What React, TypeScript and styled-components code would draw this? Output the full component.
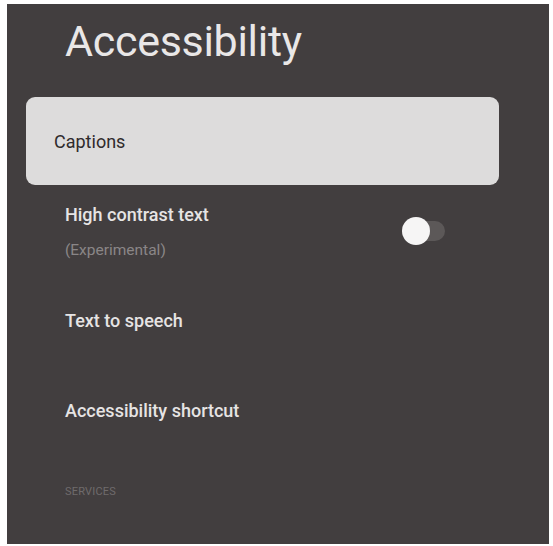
import styled, { createGlobalStyle } from 'styled-components';

const GlobalStyle = createGlobalStyle`
	html, body {
		margin: 0;
		padding: 0;
		background: #ffffff;
	}
	body {
		font-family: Roboto, "Noto Sans", "Liberation Sans", sans-serif;
	}
`;

type Item = {
	title: string;
	subtitle?: string;
	toggle?: boolean;
};

const items: Item[] = [
	{ title: 'High contrast text', subtitle: '(Experimental)', toggle: false },
	{ title: 'Text to speech' },
	{ title: 'Accessibility shortcut' },
];

export default function App() {
	return (
		<Page>
			<GlobalStyle />
			<Panel>
				<Title>Accessibility</Title>

				<List>
					<FocusedCard>
						<CardLabel>Captions</CardLabel>
					</FocusedCard>

					{items.map((item) => (
						<Row key={item.title}>
							<TextCol>
								<RowTitle>{item.title}</RowTitle>
								{item.subtitle && <RowSub>{item.subtitle}</RowSub>}
							</TextCol>
							{item.toggle !== undefined && (
								<Track>
									<Thumb />
								</Track>
							)}
						</Row>
					))}

					<SectionHeader>Services</SectionHeader>
				</List>
			</Panel>
		</Page>
	);
}

const Page = styled.div`
	display: flex;
	width: 553px;
	height: 546px;
	padding: 4px 4px 2px 7px;
	box-sizing: border-box;
	background: #ffffff;
`;

const Panel = styled.div`
	flex: 1;
	display: flex;
	flex-direction: column;
	background: #423e3f;
	padding: 12px 50px 0 19px;
	box-sizing: border-box;
	overflow: hidden;
`;

const Title = styled.h1`
	margin: 0 0 31px 39px;
	font-size: 43px;
	line-height: 50px;
	font-weight: 400;
	letter-spacing: -0.3px;
	color: #e9e7e7;
`;

const List = styled.div`
	display: flex;
	flex-direction: column;
	gap: 2px;
`;

const FocusedCard = styled.div`
	display: flex;
	align-items: center;
	height: 88px;
	padding-left: 28px;
	border-radius: 9px;
	background: #dddcdc;
`;

const CardLabel = styled.span`
	font-size: 18px;
	color: #2f2b2c;
`;

const Row = styled.div`
	display: flex;
	align-items: center;
	justify-content: space-between;
	height: 88px;
	padding: 0 54px 0 39px;
`;

const TextCol = styled.div`
	display: flex;
	flex-direction: column;
	gap: 15px;
`;

const RowTitle = styled.span`
	font-size: 18px;
	line-height: 22px;
	font-weight: 500;
	color: #e6e4e4;
`;

const RowSub = styled.span`
	font-size: 15.5px;
	line-height: 18px;
	color: #8a8687;
`;

const Track = styled.div`
	position: relative;
	width: 36px;
	height: 20px;
	border-radius: 10px;
	background: #5c5858;
`;

const Thumb = styled.div`
	position: absolute;
	left: -7px;
	top: -4px;
	width: 28px;
	height: 28px;
	border-radius: 50%;
	background: #f6f5f5;
`;

const SectionHeader = styled.div`
	padding: 28px 0 0 39px;
	font-size: 11px;
	line-height: 14px;
	text-transform: uppercase;
	letter-spacing: 0.2px;
	color: #6f6b6c;
`;
